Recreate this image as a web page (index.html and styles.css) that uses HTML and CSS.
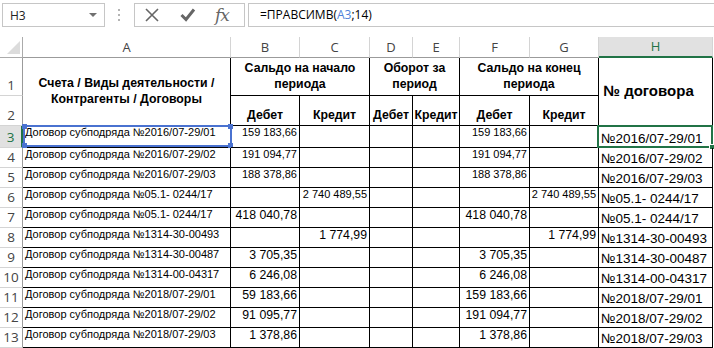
FILE: index.html
```html
<!DOCTYPE html>
<html lang="ru">

<head>
    <meta charset="UTF-8">
    <title>ПРАВСИМВ</title>
    <link rel="stylesheet" href="styles.css">
</head>

<body>

    <!-- Formula bar -->
    <div class="formula-bar">
        <div class="name-box">
            <span>H3</span>
            <svg width="8" height="4" viewBox="0 0 8 4"><polygon points="0,0 8,0 4,4" fill="#707070"/></svg>
        </div>
        <div class="grip">
            <svg width="3" height="12" viewBox="0 0 3 12">
                <rect x="0" y="0" width="2" height="2" fill="#b4b4b4"/>
                <rect x="0" y="5" width="2" height="2" fill="#b4b4b4"/>
                <rect x="0" y="10" width="2" height="2" fill="#b4b4b4"/>
            </svg>
        </div>
        <div class="fx-buttons">
            <svg class="btn-cancel" width="16" height="16" viewBox="0 0 16 16">
                <path d="M2 2 L14 14 M14 2 L2 14" stroke="#666" stroke-width="1.6" fill="none"/>
            </svg>
            <svg class="btn-ok" width="16" height="16" viewBox="0 0 16 16">
                <path d="M1.5 8 L6 12.5 L14 2.5" stroke="#666" stroke-width="3" fill="none"/>
            </svg>
            <span class="fx">fx</span>
        </div>
        <div class="formula">=ПРАВСИМВ(<span class="ref">A3</span>;14)</div>
    </div>

    <!-- Sheet -->
    <div class="sheet">
        <!-- column headers -->
        <div class="corner">
            <svg width="16" height="16" viewBox="0 0 16 16"><polygon points="2,15 15,15 15,2" fill="#dcdcdc"/></svg>
        </div>
        <div class="ch">A</div>
        <div class="ch">B</div>
        <div class="ch">C</div>
        <div class="ch">D</div>
        <div class="ch">E</div>
        <div class="ch">F</div>
        <div class="ch">G</div>
        <div class="ch sel">H</div>

        <!-- row 1 -->
        <div class="rh">1</div>
        <div class="c hd tall">Счета / Виды деятельности /<br>Контрагенты / Договоры</div>
        <div class="c hd span2">Сальдо на начало<br>периода</div>
        <div class="c hd span2">Оборот за<br>период</div>
        <div class="c hd span2">Сальдо на конец<br>периода</div>
        <div class="c hd tall big">№ договора</div>

        <!-- row 2 -->
        <div class="rh">2</div>
        <div class="c hd low">Дебет</div>
        <div class="c hd low">Кредит</div>
        <div class="c hd low">Дебет</div>
        <div class="c hd low">Кредит</div>
        <div class="c hd low">Дебет</div>
        <div class="c hd low">Кредит</div>

        <!-- row 3 -->
        <div class="rh sel">3</div>
        <div class="c txt marked">Договор субподряда №2016/07-29/01<span class="ref-box"><i class="h tl"></i><i class="h tr"></i><i class="h bl"></i><i class="h br"></i></span></div>
        <div class="c num">159 183,66</div>
        <div class="c"></div>
        <div class="c"></div>
        <div class="c"></div>
        <div class="c num">159 183,66</div>
        <div class="c"></div>
        <div class="c no active">№2016/07-29/01<span class="cursor"><i class="fill"></i></span></div>

        <!-- row 4 -->
        <div class="rh">4</div>
        <div class="c txt">Договор субподряда №2016/07-29/02</div>
        <div class="c num">191 094,77</div>
        <div class="c"></div>
        <div class="c"></div>
        <div class="c"></div>
        <div class="c num">191 094,77</div>
        <div class="c"></div>
        <div class="c no">№2016/07-29/02</div>

        <!-- row 5 -->
        <div class="rh">5</div>
        <div class="c txt">Договор субподряда №2016/07-29/03</div>
        <div class="c num">188 378,86</div>
        <div class="c"></div>
        <div class="c"></div>
        <div class="c"></div>
        <div class="c num">188 378,86</div>
        <div class="c"></div>
        <div class="c no">№2016/07-29/03</div>

        <!-- row 6 -->
        <div class="rh">6</div>
        <div class="c txt">Договор субподряда №05.1- 0244/17</div>
        <div class="c"></div>
        <div class="c num">2 740 489,55</div>
        <div class="c"></div>
        <div class="c"></div>
        <div class="c"></div>
        <div class="c num">2 740 489,55</div>
        <div class="c no">№05.1- 0244/17</div>

        <!-- row 7 -->
        <div class="rh">7</div>
        <div class="c txt">Договор субподряда №05.1- 0244/17</div>
        <div class="c num lg">418 040,78</div>
        <div class="c"></div>
        <div class="c"></div>
        <div class="c"></div>
        <div class="c num lg">418 040,78</div>
        <div class="c"></div>
        <div class="c no">№05.1- 0244/17</div>

        <!-- row 8 -->
        <div class="rh">8</div>
        <div class="c txt">Договор субподряда №1314-30-00493</div>
        <div class="c"></div>
        <div class="c num lg">1 774,99</div>
        <div class="c"></div>
        <div class="c"></div>
        <div class="c"></div>
        <div class="c num lg">1 774,99</div>
        <div class="c no">№1314-30-00493</div>

        <!-- row 9 -->
        <div class="rh">9</div>
        <div class="c txt">Договор субподряда №1314-30-00487</div>
        <div class="c num lg">3 705,35</div>
        <div class="c"></div>
        <div class="c"></div>
        <div class="c"></div>
        <div class="c num lg">3 705,35</div>
        <div class="c"></div>
        <div class="c no">№1314-30-00487</div>

        <!-- row 10 -->
        <div class="rh">10</div>
        <div class="c txt">Договор субподряда №1314-00-04317</div>
        <div class="c num lg">6 246,08</div>
        <div class="c"></div>
        <div class="c"></div>
        <div class="c"></div>
        <div class="c num lg">6 246,08</div>
        <div class="c"></div>
        <div class="c no">№1314-00-04317</div>

        <!-- row 11 -->
        <div class="rh">11</div>
        <div class="c txt">Договор субподряда №2018/07-29/01</div>
        <div class="c num lg">59 183,66</div>
        <div class="c"></div>
        <div class="c"></div>
        <div class="c"></div>
        <div class="c num lg">159 183,66</div>
        <div class="c"></div>
        <div class="c no">№2018/07-29/01</div>

        <!-- row 12 -->
        <div class="rh">12</div>
        <div class="c txt">Договор субподряда №2018/07-29/02</div>
        <div class="c num lg">91 095,77</div>
        <div class="c"></div>
        <div class="c"></div>
        <div class="c"></div>
        <div class="c num lg">191 094,77</div>
        <div class="c"></div>
        <div class="c no">№2018/07-29/02</div>

        <!-- row 13 -->
        <div class="rh">13</div>
        <div class="c txt">Договор субподряда №2018/07-29/03</div>
        <div class="c num lg">1 378,86</div>
        <div class="c"></div>
        <div class="c"></div>
        <div class="c"></div>
        <div class="c num lg">1 378,86</div>
        <div class="c"></div>
        <div class="c no">№2018/07-29/03</div>
    </div>

</body>

</html>
```

FILE: styles.css
```css
/* General Reset */
* {
    margin: 0;
    padding: 0;
    box-sizing: border-box;
}

body {
    font-family: "Liberation Sans", Arial, sans-serif;
    background: #fff;
    color: #000;
    width: 714px;
    overflow: hidden;
}

/* Formula bar */
.formula-bar {
    display: flex;
    align-items: flex-start;
    height: 37px;
    padding-top: 3px;
}

.name-box {
    margin-left: 2px;
    width: 103px;
    height: 24px;
    border: 1px solid #c6c6c6;
    display: flex;
    align-items: center;
    justify-content: space-between;
    padding: 0 7px 0 7px;
    font-family: "Open Sans", sans-serif;
    font-size: 12px;
    color: #222;
}

.grip {
    width: 29px;
    height: 24px;
    display: flex;
    align-items: center;
    justify-content: center;
}

.fx-buttons {
    width: 111px;
    height: 24px;
    border: 1px solid #c6c6c6;
    display: flex;
    align-items: center;
    padding-left: 9px;
}

.btn-ok {
    margin-left: 20px;
}

.fx {
    margin-left: 19px;
    font-family: "DejaVu Serif", "Liberation Serif", serif;
    font-style: italic;
    font-size: 17px;
    line-height: 20px;
    color: #666;
    letter-spacing: -1px;
}

.formula {
    flex: 1;
    margin-left: 3px;
    height: 24px;
    border: 1px solid #c6c6c6;
    border-right: none;
    padding-left: 11px;
    font-family: "Open Sans", sans-serif;
    font-size: 12px;
    line-height: 22px;
    color: #000;
}

.formula .ref {
    color: #4f81d9;
}

/* Sheet grid */
.sheet {
    display: grid;
    grid-template-columns: 23px 208px 69px 70px 43px 47px 70px 69px 114px;
    grid-template-rows: 21px 38px 30px 22px repeat(10, 20px);
}

.corner {
    border-right: 1px solid #ababab;
    border-bottom: 1px solid #ababab;
    display: flex;
    align-items: flex-end;
    justify-content: flex-end;
    padding: 0 1px 2px 0;
}

/* Column headers */
.ch {
    border-right: 1px solid #d4d4d4;
    border-bottom: 1px solid #9b9b9b;
    font-family: "Open Sans", sans-serif;
    font-size: 13px;
    color: #444;
    display: flex;
    align-items: center;
    justify-content: center;
    padding-bottom: 1px;
}

.ch.sel {
    background: #e1e1e1;
    color: #217346;
    border-bottom: 2px solid #217346;
}

/* Row headers */
.rh {
    border-right: 1px solid #9b9b9b;
    border-bottom: 1px solid #d4d4d4;
    font-family: "Open Sans", sans-serif;
    font-size: 13.5px;
    line-height: 15px;
    color: #444;
    display: flex;
    align-items: flex-end;
    justify-content: center;
    padding-bottom: 2px;
}

.rh.sel {
    background: #e1e1e1;
    color: #217346;
    border-right: 2px solid #217346;
}

/* Cells */
.c {
    border-right: 1px solid #000;
    border-bottom: 1px solid #000;
    display: flex;
    align-items: flex-start;
    white-space: nowrap;
    position: relative;
}

.hd {
    font-weight: bold;
    font-size: 12.3px;
    line-height: 16px;
    text-align: center;
    align-items: center;
    justify-content: center;
    padding-bottom: 1px;
}

.hd.big {
    font-size: 15px;
    padding-right: 14px;
}

.hd.low {
    align-items: flex-end;
    padding-bottom: 2px;
}

.tall {
    grid-row: span 2;
}

.span2 {
    grid-column: span 2;
}

.txt {
    font-size: 11px;
    line-height: 13px;
    padding-left: 2px;
}

.num {
    font-size: 11px;
    line-height: 13px;
    justify-content: flex-end;
    padding-right: 2px;
}

.num.lg {
    font-size: 12.3px;
    line-height: 14px;
}

.no {
    font-size: 13.5px;
    line-height: 17px;
    align-items: flex-end;
    padding-left: 2px;
}

/* Reference highlight on A3 */
.ref-box {
    position: absolute;
    left: 0;
    top: -1px;
    right: -2px;
    bottom: 0;
    border: 2px solid #4a72d0;
}

.ref-box .h {
    position: absolute;
    width: 5px;
    height: 5px;
    background: #4a72d0;
}

.ref-box .tl { left: -3px; top: -3px; }
.ref-box .tr { right: -3px; top: -3px; }
.ref-box .bl { left: -3px; bottom: -3px; }
.ref-box .br { right: -3px; bottom: -3px; }

/* Active cell H3 */
.cursor {
    position: absolute;
    left: -2px;
    top: -1px;
    right: -1px;
    bottom: -1px;
    border: 2px solid #217346;
}

.cursor .fill {
    position: absolute;
    right: -4px;
    bottom: -4px;
    width: 6px;
    height: 6px;
    background: #217346;
    border: 1px solid #fff;
}
```
